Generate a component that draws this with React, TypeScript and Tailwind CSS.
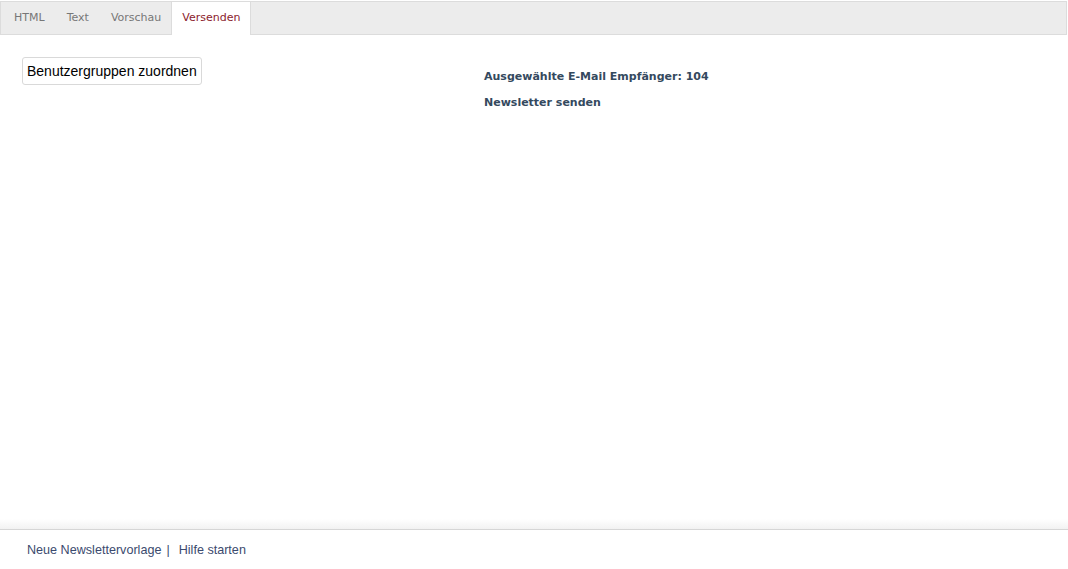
const tabs = ["HTML", "Text", "Vorschau", "Versenden"]

const App = () => {
    const active = "Versenden"

    return (
        <div className="flex h-[569px] w-[1068px] flex-col bg-white">
            <div className="mt-px flex h-[34px] w-[1067px] border border-[#dcdcdc] bg-[#ececec] pl-[2px] font-['DejaVu_Sans',sans-serif] text-[11px]">
                {tabs.map((tab) => (
                    <div
                        key={tab}
                        className={
                            tab === active
                                ? "-mb-px -ml-px flex items-center border-x border-[#dcdcdc] bg-white px-[10px] text-[#8b1c2c]"
                                : "flex items-center px-[11px] text-[#777]"
                        }
                    >
                        {tab}
                    </div>
                ))}
            </div>

            <div className="flex flex-1 pt-[22px]">
                <div className="w-[484px] pl-[22px]">
                    <button
                        type="button"
                        className="h-[28px] rounded-[3px] border border-[#d9d9d9] bg-white px-[4px] font-['Liberation_Sans',sans-serif] text-[14px] text-black"
                    >
                        Benutzergruppen zuordnen
                    </button>
                </div>
                <div className="pt-[12px] font-['DejaVu_Sans',sans-serif] text-[11px] font-bold text-[#34495e]">
                    <p className="leading-[16px]">Ausgewählte E-Mail Empfänger: 104</p>
                    <p className="mt-[10px] leading-[16px]">Newsletter senden</p>
                </div>
            </div>

            <div className="h-[10px] bg-gradient-to-b from-white to-[#f2f2f2]"></div>
            <div className="flex h-[40px] items-center border-t border-[#d6d6d6] pl-[27px] pt-[2px] font-['Liberation_Sans',sans-serif] text-[12.6px] text-[#3b4a6e]">
                <span>Neue Newslettervorlage</span>
                <span className="ml-[5px] mr-[9px]">|</span>
                <span>Hilfe starten</span>
            </div>
        </div>
    )
}

export default App
